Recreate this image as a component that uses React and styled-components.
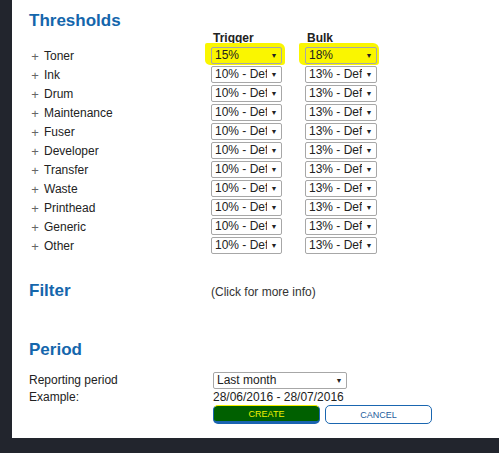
import React from "react";
import styled, { createGlobalStyle } from "styled-components";

const Global = createGlobalStyle`
  html, body { margin: 0; padding: 0; background: #22252d; }
  body { font-family: "Liberation Sans", Arial, sans-serif; }
`;

const Page = styled.div`
  width: 499px;
  height: 453px;
  background: #22252d;
  overflow: hidden;
`;

const Panel = styled.div`
  margin-left: 12px;
  width: 487px;
  height: 438px;
  background: #fff;
  box-sizing: border-box;
  padding: 11px 0 0 17px;
  color: #222;
  font-size: 12px;
`;

const Heading = styled.h2`
  margin: 0;
  font-size: 17px;
  line-height: ${(p) => p.$lh || 22}px;
  font-weight: bold;
  color: #1466ac;
`;

const Grid = styled.div`
  display: grid;
  grid-template-columns: 159px 71px 72px;
  column-gap: 23px;
  row-gap: 2px;
  align-items: center;
`;

const ColHead = styled.div`
  font-weight: bold;
  font-size: 12px;
  line-height: 14px;
  padding-left: 2px;
  color: #222;
`;

const Label = styled.div`
  display: flex;
  align-items: center;
  gap: 5px;
  padding-left: 2px;
  height: 17px;
  font-size: 12px;
  color: #222;
`;

const Plus = styled.span`
  font-size: 13px;
  color: #666;
  width: 8px;
  display: inline-block;
  text-align: center;
  transform: translateY(1px);
`;

const Cell = styled.div`
  position: relative;
`;

const Select = styled.div`
  position: relative;
  box-sizing: border-box;
  width: ${(p) => p.$w || "100%"};
  height: 17px;
  border: 1px solid #a7a7a7;
  border-radius: 2px;
  background: ${(p) => (p.$hl ? "transparent" : "#fff")};
  display: flex;
  align-items: center;
  padding: 0 14px 0 3px;
  font-size: 12px;
  color: #222;
  white-space: nowrap;
  z-index: 1;
`;

const Value = styled.span`
  flex: 1;
  min-width: 0;
  overflow: hidden;
  line-height: 15px;
`;

const Arrow = styled.span`
  position: absolute;
  right: 0;
  top: 0;
  bottom: 0;
  width: 14px;
  display: flex;
  align-items: center;
  justify-content: center;
  font-size: 7px;
  color: #222;
`;

const Highlight = styled.div`
  position: absolute;
  left: -6px;
  top: -4px;
  width: 80px;
  height: 22px;
  background: #faf600;
  border-radius: 2px 6px 3px 5px;
  z-index: 0;
`;

const Section = styled.div`
  margin-top: ${(p) => p.$mt}px;
`;

const FilterRow = styled.div`
  display: grid;
  grid-template-columns: 182px auto;
  align-items: center;
`;

const Info = styled.div`
  font-size: 12px;
  color: #333;
  padding-top: 2px;
`;

const FormGrid = styled.div`
  display: grid;
  grid-template-columns: 184px auto;
  grid-template-rows: 17px 16px 19px;
  align-items: center;
  margin-top: 11px;
`;

const FormLabel = styled.div`
  font-size: 12px;
  line-height: 15px;
  color: #222;
`;

const Buttons = styled.div`
  display: flex;
  gap: 5px;
`;

const Button = styled.button`
  box-sizing: border-box;
  width: 107px;
  height: 19px;
  border-radius: 5px;
  font-family: "Liberation Sans", Arial, sans-serif;
  font-size: 9px;
  padding: 0;
  cursor: pointer;
  border: 1px solid #1a66b0;
  background: ${(p) => (p.$primary ? "#006000" : "#fff")};
  color: ${(p) => (p.$primary ? "#f0f000" : "#1d5c9c")};
  ${(p) =>
    p.$primary
      ? `border-top: 1px solid #f6f000; border-bottom: 3px solid #1a64b0;`
      : ""}
`;

const rows = [
  "Toner",
  "Ink",
  "Drum",
  "Maintenance",
  "Fuser",
  "Developer",
  "Transfer",
  "Waste",
  "Printhead",
  "Generic",
  "Other",
];

function Sel({ value, hl, w }) {
  return (
    <Cell>
      {hl && <Highlight />}
      <Select $hl={hl} $w={w}>
        <Value>{value}</Value>
        <Arrow>▼</Arrow>
      </Select>
    </Cell>
  );
}

export default function App() {
  return (
    <Page>
      <Global />
      <Panel>
        <Heading $lh={20}>Thresholds</Heading>
        <Grid>
          <div />
          <ColHead>Trigger</ColHead>
          <ColHead>Bulk</ColHead>
          {rows.map((r, i) => (
            <React.Fragment key={r}>
              <Label>
                <Plus>+</Plus>
                {r}
              </Label>
              <Sel value={i === 0 ? "15%" : "10% - Default"} hl={i === 0} />
              <Sel value={i === 0 ? "18%" : "13% - Default"} hl={i === 0} />
            </React.Fragment>
          ))}
        </Grid>
        <Section $mt={26}>
          <FilterRow>
            <Heading>Filter</Heading>
            <Info>(Click for more info)</Info>
          </FilterRow>
        </Section>
        <Section $mt={37}>
          <Heading>Period</Heading>
          <FormGrid>
            <FormLabel>Reporting period</FormLabel>
            <Sel value="Last month" w="134px" />
            <FormLabel>Example:</FormLabel>
            <FormLabel>28/06/2016 - 28/07/2016</FormLabel>
            <div />
            <Buttons>
              <Button $primary>CREATE</Button>
              <Button>CANCEL</Button>
            </Buttons>
          </FormGrid>
        </Section>
      </Panel>
    </Page>
  );
}
